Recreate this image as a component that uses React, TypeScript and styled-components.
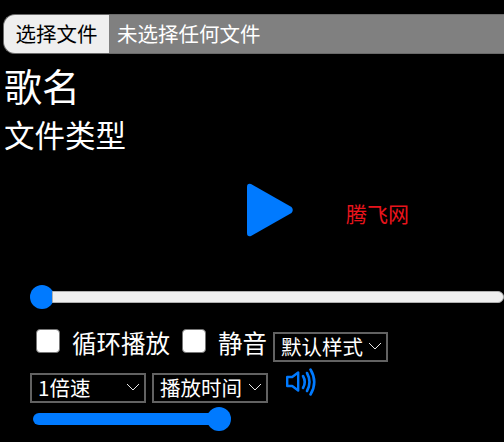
import styled, { createGlobalStyle } from "styled-components";

const GlobalStyle = createGlobalStyle`
  html, body {
    margin: 0;
    padding: 0;
    background: #000;
  }
  body {
    width: 504px;
    height: 442px;
    overflow: hidden;
    color: #fff;
    font-family: "Noto Sans CJK SC", "Liberation Sans", sans-serif;
  }
`;

function Chevron() {
  return (
    <ChevronIcon viewBox="0 0 14 8" aria-hidden="true">
      <path d="M1 1l6 6 6-6" fill="none" stroke="#e8e8e8" strokeWidth="1" />
    </ChevronIcon>
  );
}

export default function App() {
  return (
    <Root>
      <GlobalStyle />
      <FileBar>
        <FileButton>选择文件</FileButton>
        <FileName>未选择任何文件</FileName>
      </FileBar>
      <SongName>歌名</SongName>
      <FileType>文件类型</FileType>
      <PlayRow>
        <svg width="48" height="54" viewBox="0 0 48 54" aria-hidden="true">
          <path
            d="M5 1 L45.500 24 Q48 27 45.500 30 L5 53 Q1 54 1 50 L1 4 Q1 0 5 1 Z"
            fill="#007aff"
          />
        </svg>
        <Brand>腾飞网</Brand>
      </PlayRow>
      <ProgressRow>
        <ProgressThumb />
        <ProgressTrack />
      </ProgressRow>
      <OptionRow>
        <Checkbox />
        <OptionLabel>循环播放</OptionLabel>
        <Checkbox />
        <OptionLabel>静音</OptionLabel>
        <Select $width={115} $offset={-6} $top={8}>
          默认样式
          <Chevron />
        </Select>
      </OptionRow>
      <ControlRow>
        <Select $width={116}>
          1倍速
          <Chevron />
        </Select>
        <Select $width={116}>
          播放时间
          <Chevron />
        </Select>
        <SpeakerIcon viewBox="0 0 30 28" aria-hidden="true">
          <path d="M1.200 9h5l6-4.500v18l-6-4.500h-5z" fill="none" stroke="#007aff" strokeWidth="2.400" strokeLinejoin="round" />
          <path d="M17 8q3.500 6 0 12" fill="none" stroke="#007aff" strokeWidth="2.600" strokeLinecap="round" />
          <path d="M21 5q5 9 0 18" fill="none" stroke="#007aff" strokeWidth="2.600" strokeLinecap="round" />
          <path d="M24.500 1.500q7.500 12.500 0 25" fill="none" stroke="#007aff" strokeWidth="2.600" strokeLinecap="round" />
        </SpeakerIcon>
      </ControlRow>
      <VolumeRow>
        <VolumeTrack />
        <VolumeThumb />
      </VolumeRow>
    </Root>
  );
}

const Root = styled.div`
  display: flex;
  flex-direction: column;
  align-items: flex-start;
  width: 504px;
  padding-top: 14px;
`;

const FileBar = styled.div`
  display: flex;
  align-items: stretch;
  width: 501px;
  height: 40px;
  margin-left: 3px;
  box-sizing: border-box;
  border: 1px solid #6a6a6a;
  border-right: none;
  border-radius: 12px 0 0 12px;
  background: #808080;
  overflow: hidden;
  font-size: 20.5px;
`;

const FileButton = styled.div`
  display: flex;
  align-items: center;
  justify-content: center;
  width: 105px;
  padding-bottom: 2px;
  box-sizing: border-box;
  background: #efefef;
  color: #000;
`;

const FileName = styled.div`
  display: flex;
  align-items: center;
  padding: 0 0 2px 8px;
  color: #fff;
`;

const SongName = styled.div`
  margin: 4px 0 0 4px;
  font-size: 38px;
  line-height: 54px;
`;

const FileType = styled.div`
  margin: 0 0 0 4px;
  font-size: 30.5px;
  line-height: 44px;
`;

const PlayRow = styled.div`
  display: flex;
  align-items: center;
  height: 54px;
  margin: 27px 0 0 246px;
`;

const Brand = styled.div`
  margin: 6px 0 0 52px;
  color: #e8141c;
  font-size: 21px;
`;

const ProgressRow = styled.div`
  display: flex;
  align-items: center;
  width: 474px;
  margin: 48px 0 0 30px;
`;

const ProgressThumb = styled.div`
  flex: none;
  width: 24px;
  height: 24px;
  border-radius: 50%;
  background: #007aff;
`;

const ProgressTrack = styled.div`
  flex: 1;
  height: 12px;
  margin-left: -2px;
  box-sizing: border-box;
  border: 1px solid #b0b0b0;
  border-radius: 0 6px 6px 0;
  background: #efefef;
`;

const OptionRow = styled.div`
  display: flex;
  align-items: center;
  height: 36px;
  margin: 16px 0 0 36px;
`;

const Checkbox = styled.div`
  flex: none;
  width: 24px;
  height: 24px;
  margin-top: -4px;
  box-sizing: border-box;
  border: 1px solid #767676;
  border-radius: 4px;
  background: #fff;
`;

const OptionLabel = styled.div`
  margin: 0 12px;
  font-size: 24.500px;
  line-height: 36px;
`;

const Select = styled.div<{ $width: number; $offset?: number; $top?: number }>`
  display: flex;
  align-items: center;
  justify-content: space-between;
  flex: none;
  width: ${(p) => p.$width}px;
  height: 30px;
  margin-left: ${(p) => p.$offset ?? 0}px;
  margin-top: ${(p) => p.$top ?? 0}px;
  padding: 0 4px 3px 6px;
  box-sizing: border-box;
  border: 2px solid #626262;
  font-size: 20.5px;
  color: #fff;
`;

const ChevronIcon = styled.svg`
  flex: none;
  width: 14px;
  height: 8px;
`;

const ControlRow = styled.div`
  display: flex;
  align-items: flex-start;
  gap: 6px;
  height: 30px;
  margin: 12px 0 0 30px;
`;

const SpeakerIcon = styled.svg`
  flex: none;
  width: 30px;
  height: 28px;
  margin: -5px 0 0 12px;
`;

const VolumeRow = styled.div`
  display: flex;
  align-items: center;
  margin: 4px 0 0 33px;
`;

const VolumeTrack = styled.div`
  width: 180px;
  height: 12px;
  border-radius: 6px 0 0 6px;
  background: #007aff;
`;

const VolumeThumb = styled.div`
  flex: none;
  width: 24px;
  height: 24px;
  margin-left: -6px;
  border-radius: 50%;
  background: #007aff;
`;
